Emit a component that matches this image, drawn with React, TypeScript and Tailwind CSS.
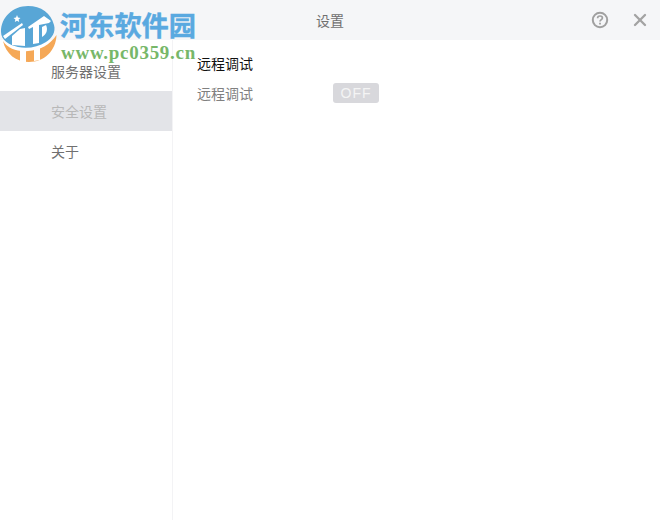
import { X } from 'lucide-react';

const cjk = "font-['Noto_Sans_CJK_SC','Liberation_Sans',sans-serif]";

function WatermarkLogo() {
  return (
    <svg width="58" height="62" viewBox="0 0 58 62" className="absolute left-0 top-[4px]">
      {/* orange lower band */}
      <path d="M3 37 C8 45 18 48 28 47 C40 46 50 41 56.5 31 C56 47 44 58 29 58 C16 58 6 50 3 37 Z" fill="#f5a857" />
      <path d="M20 46 L26 46 L26 58 L20 58 Z M34 45 L40 43 L40 56 L34 57 Z" fill="#ffffff" />
      {/* blue disc */}
      <path d="M1 28 C1 13 13 2 28 2 C41 2 51 9 54 21 C56 28 52 34 46 38 C38 43 28 45 18 43 C9 41 1 36 1 28 Z" fill="#58a6d6" />
      {/* house strokes */}
      <path d="M12 41 L12 32 L20 25 L25 24 L25 42 Z" fill="#ffffff" />
      <path d="M3 32 L22 19 L23 21 L5 35 Z" fill="#ffffff" />
      <path d="M33 40 L33 23 L29 25 L28 23 L44 12 L51 17 L49 19 L39 21 L39 39 Z" fill="#ffffff" />
      <path d="M42 23 L46 21 C48 25 47 30 42 33 Z" fill="#ffffff" />
      <path d="M17 11 L18 13.5 L20.5 14 L18.6 15.6 L19.2 18 L17 16.7 L14.8 18 L15.4 15.6 L13.5 14 L16 13.5 Z" fill="#ffffff" />
    </svg>
  );
}

export default function App() {
  return (
    <div className={`relative w-[660px] h-[520px] bg-white overflow-hidden text-sm ${cjk}`}>
      <header className="relative h-10 bg-[#f5f6f8] flex items-center justify-center">
        <span className="text-[#707070] text-[14px]">设置</span>
        <div className="absolute right-0 top-0 h-10 flex items-center">
          <span className="w-10 h-10 flex items-center justify-center">
            <svg width="18" height="18" viewBox="0 0 18 18" fill="none" stroke="#a0a0a0" strokeWidth="2">
              <circle cx="9" cy="9" r="7.2" />
              <path d="M6.6 7.2 C6.6 5.7 7.7 5 9 5 C10.4 5 11.4 5.9 11.4 7 C11.4 8.6 9 8.7 9 10.6" strokeWidth="1.7" />
              <path d="M9 11.8 V13.4" strokeWidth="1.8" />
            </svg>
          </span>
          <span className="w-10 h-10 flex items-center justify-center">
            <X size={20} strokeWidth={2.8} color="#a3a3a3" />
          </span>
        </div>
      </header>

      <div className="flex h-[480px]">
        <aside className="w-[173px] border-r border-[#f3f3f5] pt-[11px] shrink-0">
          <div className="h-10 pl-[51px] flex items-center text-[#707070]">服务器设置</div>
          <div className="h-10 pl-[51px] flex items-center bg-[#e3e4e8] text-[#b8b8b8]">安全设置</div>
          <div className="h-10 pl-[51px] flex items-center text-[#707070]">关于</div>
        </aside>
        <main className="flex-1 pl-6 pt-[13px]">
          <div className="h-5 leading-5 text-[#111111]">远程调试</div>
          <div className="mt-[10px] flex items-center h-5">
            <span className="w-[136px] text-[#808080]">远程调试</span>
            <span className="w-[46px] h-5 rounded-[3px] bg-[#d8d8dc] text-[#f4f4f4] text-[14px] font-normal tracking-[1px] flex items-center justify-center font-['Liberation_Sans',sans-serif]">
              OFF
            </span>
          </div>
        </main>
      </div>

      {/* site watermark over the window */}
      <WatermarkLogo />
      <div className="absolute left-[60px] top-[7px] text-[27.2px] leading-[34px] font-bold text-[#5aa9e0] [-webkit-text-stroke:0.4px_#5aa9e0] font-['Noto_Sans_CJK_SC',serif] whitespace-nowrap">
        河东软件园
      </div>
      <div className="absolute left-[61px] top-[45px] text-[19px] leading-[15px] font-bold tracking-[0.72px] text-[#77b769] font-['Liberation_Serif',serif] whitespace-nowrap">
        www.pc0359.cn
      </div>
    </div>
  );
}
